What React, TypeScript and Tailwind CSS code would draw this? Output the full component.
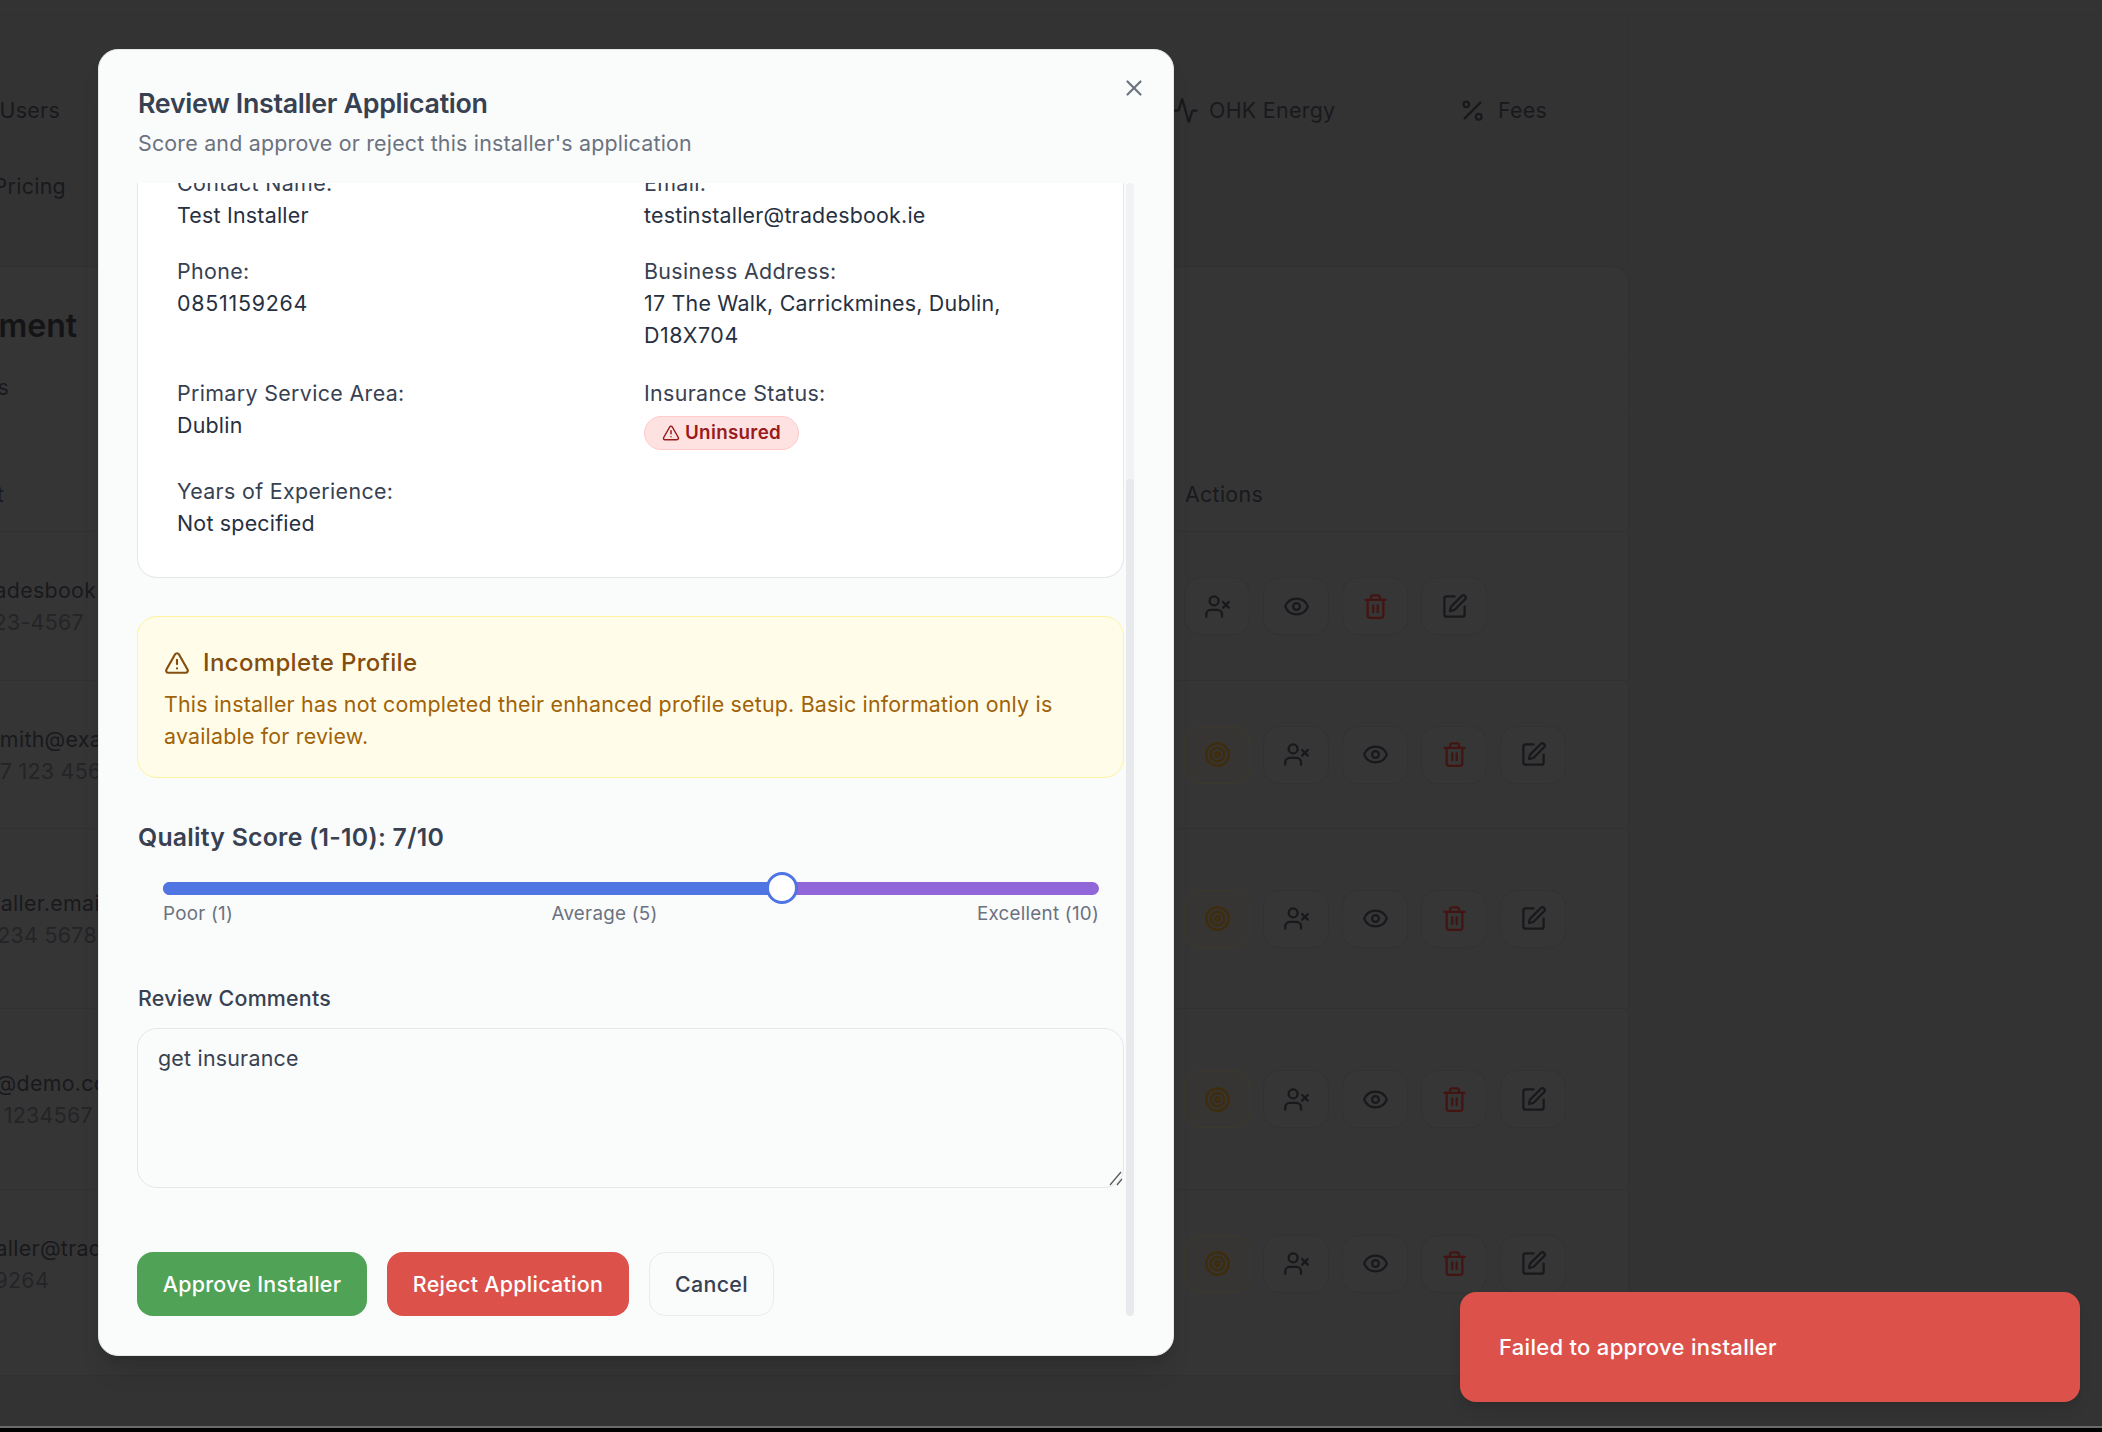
import { Activity, Percent, SquarePen, Target, Trash2, TriangleAlert, Eye, UserX, X } from 'lucide-react';

const rows = [
  { h: 'h-[149px]', email: 'admin@tradesbook.ie', emailClass: 'w-[120px]', phone: '+353 123-4567', phoneClass: 'w-[83px]', target: false },
  { h: 'h-[148px]', email: 'john.smith@example.com', emailClass: 'w-[203px]', phone: '+44 7 123 4567', phoneClass: 'w-[113px]', target: true },
  { h: 'h-[180px]', email: 'installer.email@x.ie', emailClass: 'w-[162px]', phone: '+353 1234 5678', phoneClass: 'w-[96px]', target: true },
  { h: 'h-[181px]', email: 'demo@demo.com', emailClass: 'w-[125px]', phone: '+353 1234567', phoneClass: 'w-[92px]', target: true },
  { h: 'h-[147px]', email: 'testinstaller@tradesbook.ie', emailClass: 'w-[202px]', phone: '0851159264', phoneClass: 'w-[48px]', target: true },
];

function ActionButton({ children, amber }: { children: React.ReactNode; amber?: boolean }) {
  return (
    <div
      className={`flex h-[58px] w-[66px] items-center justify-center rounded-[16px] border ${
        amber ? 'border-[#3c392b] bg-[#363533] text-[#3f2c0a]' : 'border-[#323232] bg-[#363636] text-[#18181d]'
      }`}
    >
      {children}
    </div>
  );
}

function Background() {
  return (
    <div className="flex h-full flex-col text-[21.4px] tracking-[0.3px] text-[#19191d]">
      <div className="h-[16px] border-b border-[#313131]" />
      <div className="flex h-[250px] w-[1629px] flex-col border-r border-[#313131] pt-[78px]">
        <div className="flex h-[32px] items-center">
          <span className="flex w-[60px] justify-end">Users</span>
          <span className="ml-[1112px] flex w-[287px] items-center gap-[10px]">
            <Activity size={27} strokeWidth={2} />
            OHK Energy
          </span>
          <span className="flex items-center gap-[12px]">
            <Percent size={27} strokeWidth={2} />
            Fees
          </span>
        </div>
        <div className="mt-[44px] flex h-[32px] w-[66px] justify-end leading-[32px]">Pricing</div>
      </div>
      <div className="ml-[-20px] h-[1110px] w-[1649px] rounded-b-[16px] rounded-tr-[16px] border border-[#313131] bg-[#353535]">
        <div className="h-[87px] border-b border-[#343434] pt-[39px] pl-[20px]">
          <div className="flex w-[76px] justify-end text-[32px] leading-[40px] font-semibold tracking-normal whitespace-nowrap text-[#141417]">
            Installer Management
          </div>
        </div>
        <div className="h-[62px] border-b border-[#343434] pl-[20px]">
          <div className="flex w-[8px] justify-end pt-[13px] leading-[40px] whitespace-nowrap">All installers</div>
        </div>
        <div className="flex h-[116px] items-center border-b border-[#313131] pt-[42px] pl-[20px]">
          <div className="flex w-[3px] justify-end whitespace-nowrap">Contact</div>
          <span className="ml-[1181px]">Actions</span>
        </div>
        {rows.map((row) => (
          <div key={row.email} className={`flex items-center border-b border-[#313131] pl-[20px] last:border-b-0 ${row.h}`}>
            <div className="w-[1183px] leading-[32px] whitespace-nowrap">
              <div className={`flex justify-end ${row.emailClass}`}>{row.email}</div>
              <div className={`flex justify-end text-[#242427] ${row.phoneClass}`}>{row.phone}</div>
            </div>
            <div className="flex gap-[13px]">
              {row.target ? (
                <ActionButton amber>
                  <Target size={27} />
                </ActionButton>
              ) : null}
              <ActionButton>
                <UserX size={27} />
              </ActionButton>
              <ActionButton>
                <Eye size={27} />
              </ActionButton>
              <ActionButton>
                <Trash2 size={27} className="text-[#431512]" />
              </ActionButton>
              <ActionButton>
                <SquarePen size={27} />
              </ActionButton>
            </div>
          </div>
        ))}
      </div>
      <div className="mt-[50px] h-[2px] bg-[#6a6a6a]" />
      <div className="h-[4px] bg-black" />
    </div>
  );
}

function Field({ label, children }: { label: string; children: React.ReactNode }) {
  return (
    <div>
      <div className="tracking-[0.35px] text-[#374151]">{label}</div>
      <div className="text-[#27303f]">{children}</div>
    </div>
  );
}

function ReviewModal() {
  return (
    <div className="absolute top-[49px] left-[98px] flex h-[1307px] w-[1076px] flex-col rounded-[20px] border border-[#e5e7eb] bg-[#fafbfb] pb-[39px] pl-[38px] shadow-xl">
      <div className="relative h-[133px] shrink-0 pl-[1px]">
        <h2 className="pt-[35px] text-[26.8px] leading-[36px] font-semibold tracking-[-0.3px] text-[#374151]">
          Review Installer Application
        </h2>
        <p className="mt-[7px] text-[21.4px] leading-[30px] tracking-[0.2px] text-[#6b7280]">
          Score and approve or reject this installer's application
        </p>
        <X size={26} strokeWidth={2} className="absolute top-[25px] right-[26px] text-[#6b7280]" />
      </div>
      <div className="flex min-h-0 flex-1 tracking-[0.22px]">
        <div className="w-[987px] overflow-hidden">
          <div className="-mt-[16px] rounded-b-[20px] border-x border-b border-[#e5e7eb] bg-white px-[39px] pb-[38px] text-[21.4px] leading-[32px]">
            <div className="grid grid-cols-2 gap-x-[27px]">
              <Field label="Contact Name:">Test Installer</Field>
              <Field label="Email:">testinstaller@tradesbook.ie</Field>
              <div className="mt-[24px]">
                <Field label="Phone:">
                  <span className="tracking-[0.75px]">0851159264</span>
                </Field>
              </div>
              <div className="mt-[24px]">
                <Field label="Business Address:">
                  17 The Walk, Carrickmines, Dublin,
                  <br />
                  <span className="tracking-[0.6px]">D18X704</span>
                </Field>
              </div>
              <div className="mt-[26px]">
                <Field label="Primary Service Area:">Dublin</Field>
              </div>
              <div className="mt-[26px]">
                <div className="tracking-[0.35px] text-[#374151]">Insurance Status:</div>
                <span className="mt-[7px] inline-flex h-[34px] items-center gap-[5px] rounded-full border border-[#fecaca] bg-[#fee2e2] px-[17px] text-[18.8px] font-semibold tracking-[0.3px] text-[#991b1b]">
                  <TriangleAlert size={18} strokeWidth={2} />
                  Uninsured
                </span>
              </div>
              <div className="mt-[25px]">
                <Field label="Years of Experience:">Not specified</Field>
              </div>
            </div>
          </div>

          <div className="mt-[38px] h-[162px] rounded-[20px] border border-[#fdf3a0] bg-[#fffdea] px-[26px] pt-[30px]">
            <div className="flex items-center gap-[13px] leading-[32px] font-medium tracking-[0.35px] text-[#854d0e]">
              <TriangleAlert size={26} strokeWidth={2} />
              <span className="text-[24px]">Incomplete Profile</span>
            </div>
            <p className="mt-[9px] text-[21.4px] leading-[32px] tracking-[0.2px] text-[#a16207]">
              This installer has not completed their enhanced profile setup. Basic information only is available for review.
            </p>
          </div>

          <div className="mt-[43px] pl-[1px] text-[24.8px] leading-[32px] font-semibold tracking-[0.25px] text-[#374151]">Quality Score (1-10): 7/10</div>
          <div className="relative mt-[29px] ml-[26px] h-[13px] w-[936px] rounded-full bg-[#9066d9]">
            <div className="h-full w-[619px] rounded-l-full bg-[#4f75e3]" />
            <div className="absolute top-[-10px] left-[603px] h-[32px] w-[32px] rounded-full border-[3px] border-[#4f75e3] bg-white" />
          </div>
          <div className="mt-[7px] ml-[26px] flex w-[936px] justify-between text-[18.8px] leading-[24px] tracking-[0.25px] text-[#6b7280]">
            <span>Poor (1)</span>
            <span className="mr-[1px]">Average (5)</span>
            <span>Excellent (10)</span>
          </div>

          <div className="mt-[56px] pl-[1px] text-[21.4px] leading-[32px] font-medium text-[#374151]">Review Comments</div>
          <div className="relative mt-[14px] h-[160px] rounded-[20px] border border-[#e5e7eb] px-[20px] pt-[13px] text-[21.4px] leading-[32px] text-[#374151]">
            get insurance
            <svg width="14" height="16" viewBox="0 0 14 16" className="absolute right-[0px] bottom-[1px] text-[#555]">
              <path d="M1 15 L12 2 M8 15 L13 9" fill="none" stroke="currentColor" strokeWidth="1.2" />
            </svg>
          </div>

          <div className="mt-[64px] flex gap-[20px] text-[21.4px] leading-[32px] font-medium tracking-[0.3px]">
            <button className="h-[64px] w-[230px] rounded-[16px] bg-[#50a257] text-white">Approve Installer</button>
            <button className="h-[64px] w-[242px] rounded-[16px] bg-[#dc524b] text-white">Reject Application</button>
            <button className="h-[64px] w-[125px] rounded-[16px] border border-[#e9ebee] text-[#374151]">Cancel</button>
          </div>
        </div>
        <div className="ml-[2px] flex w-[8px] flex-col overflow-hidden rounded-full bg-[#f1f2f4]">
          <div className="mt-[296px] flex-1 rounded-full bg-[#e7e9ed]" />
        </div>
      </div>
    </div>
  );
}

export default function App() {
  return (
    <div className="relative h-[1432px] w-[2102px] overflow-hidden bg-[#333333] font-['Inter',sans-serif]">
      <Background />
      <ReviewModal />
      <div className="absolute top-[1292px] left-[1460px] flex h-[110px] w-[620px] items-center rounded-[16px] bg-[#dc524b] pl-[39px] text-[22px] font-medium tracking-[0.3px] text-white shadow-lg">
        Failed to approve installer
      </div>
    </div>
  );
}
